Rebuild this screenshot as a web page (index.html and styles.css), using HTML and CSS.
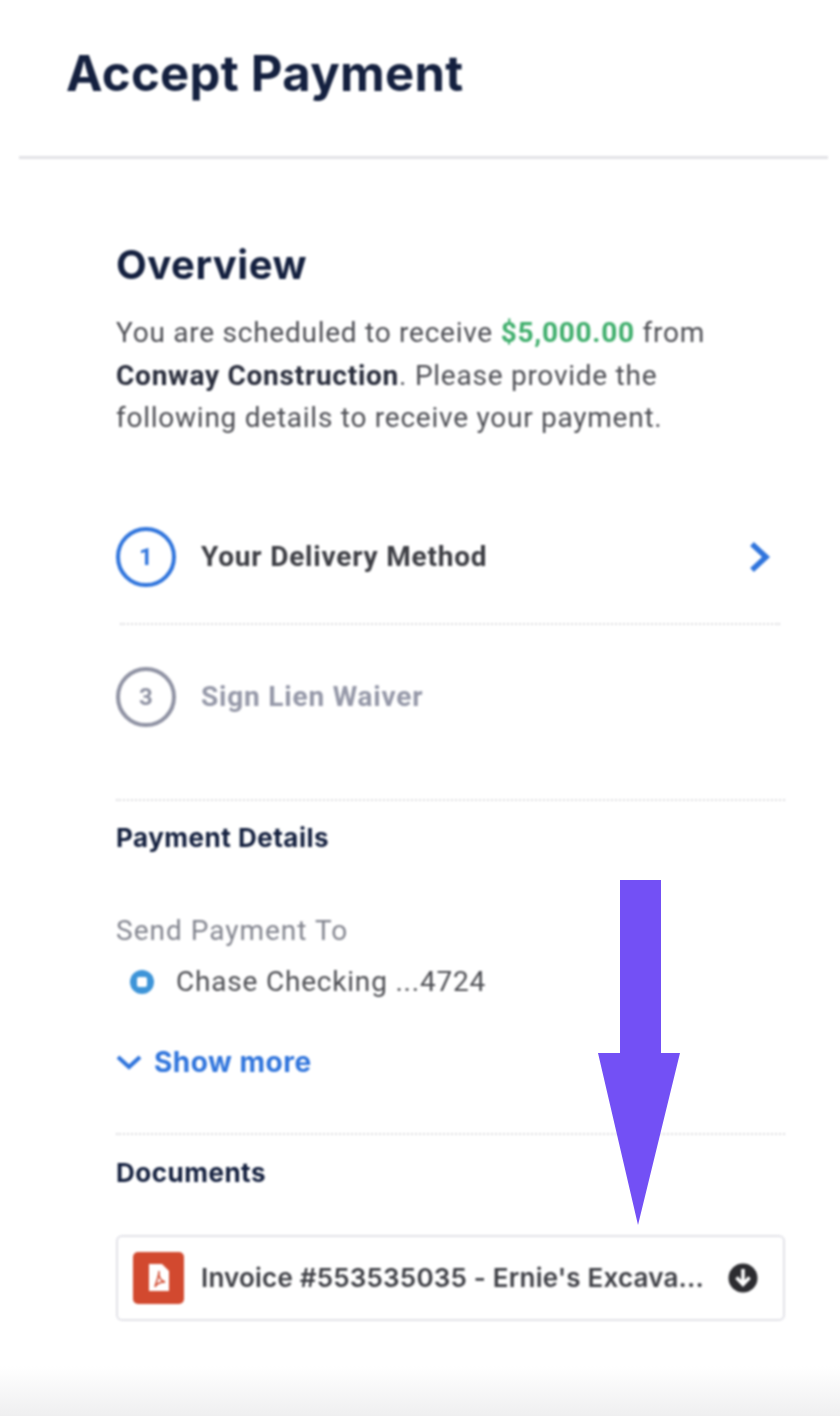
FILE: index.html
```html
<!DOCTYPE html>
<html lang="en">
<head>
    <meta charset="UTF-8">
    <meta name="viewport" content="width=device-width, initial-scale=1.0">
    <title>Accept Payment</title>
    <link rel="stylesheet" href="styles.css">
</head>
<body>

<div class="page">
    <header class="top">
        <h1>Accept Payment</h1>
    </header>

    <main class="content">
        <h2>Overview</h2>
        <p class="intro">You are scheduled to receive <b class="amount">$5,000.00</b> from <b>Conway Construction</b>. Please provide the following details to receive your payment.</p>

        <div class="steps">
            <div class="step active">
                <span class="num">1</span>
                <span class="step-name">Your Delivery Method</span>
                <svg class="chevron" width="24" height="32" viewBox="0 0 24 32" fill="none" stroke="#2f74dc" stroke-width="5.500"><path d="M4 3l14 13L4 29"/></svg>
            </div>
            <div class="step-rule"></div>
            <div class="step muted">
                <span class="num">3</span>
                <span class="step-name">Sign Lien Waiver</span>
            </div>
        </div>

        <section class="details">
            <h3>Payment Details</h3>
            <div class="label">Send Payment To</div>
            <div class="bank">
                <svg width="26" height="26" viewBox="0 0 26 26"><circle cx="13" cy="13" r="12" fill="#3d94d8"/><rect x="8" y="8" width="10" height="10" rx="2" fill="#fff"/></svg>
                <span>Chase Checking ...4724</span>
            </div>
            <a class="more" href="#">
                <svg width="26" height="16" viewBox="0 0 26 16" fill="none" stroke="#2f74dc" stroke-width="4"><path d="M2 3l11 10L24 3"/></svg>
                Show more
            </a>
        </section>

        <section class="docs">
            <h3>Documents</h3>
            <div class="file">
                <span class="pdf">
                    <svg width="20" height="27" viewBox="0 0 20 27"><path d="M0 0h13l7 7v20H0z" fill="#fff"/><path d="M10 7c-1 6 2 10 6 11-4 0-8 1-10 5 1-5 4-10 4-16z" fill="none" stroke="#d2492f" stroke-width="1.500"/></svg>
                </span>
                <span class="file-name">Invoice #553535035 - Ernie's Excava...</span>
                <svg width="30" height="30" viewBox="0 0 30 30"><circle cx="15" cy="15" r="14.500" fill="#2c2c30"/><path d="M15 6v15M8.500 14.500l6.500 7 6.500-7" fill="none" stroke="#fff" stroke-width="3.500"/></svg>
            </div>
        </section>
    </main>
</div>

<div class="fade"></div>

<svg class="arrow" width="82" height="345" viewBox="0 0 82 345"><path d="M22 0h41v173h19L40 345 0 173h22z" fill="#7350f5"/></svg>

</body>
</html>
```

FILE: styles.css
```css
html, body {
    margin: 0;
    padding: 0;
}
body {
    width: 840px;
    height: 1416px;
    position: relative;
    overflow: hidden;
    background: #fff;
    font-family: Roboto, Arial, sans-serif;
    color: #3f4045;
}
.page {
    filter: blur(0.9px);
}
.top {
    margin: 0 12px 0 19px;
    height: 156px;
    border-bottom: 3px solid #e2e2e6;
}
h1 {
    margin: 0;
    padding: 46px 0 0 47px;
    font-family: Inter, Arial, sans-serif;
    font-size: 49px;
    line-height: 56px;
    font-weight: 700;
    letter-spacing: 0.3px;
    color: #14203f;
}
.content {
    margin: 0 55px 0 116px;
}
h2 {
    margin: 0;
    padding-top: 82px;
    font-family: Inter, Arial, sans-serif;
    font-size: 40px;
    line-height: 48px;
    font-weight: 700;
    letter-spacing: 0.5px;
    color: #14203f;
}
.intro {
    margin: 23px 0 0;
    max-width: 620px;
    font-size: 28px;
    line-height: 42.500px;
    letter-spacing: 0.75px;
    color: #4d4e54;
}
.intro b {
    color: #2a2e3d;
}
.intro .amount {
    color: #3fae6c;
}
.steps {
    margin-top: 87px;
}
.step {
    display: flex;
    align-items: center;
    gap: 25px;
    height: 60px;
    font-size: 28px;
    letter-spacing: 0.8px;
    font-weight: 700;
}
.step.active {
    color: #3d3e44;
}
.step.muted {
    color: #9598a8;
}
.step-rule {
    margin: 36px 5px 42px 4px;
    border-top: 2px dotted #dcdce0;
}
.num {
    box-sizing: border-box;
    width: 60px;
    height: 60px;
    border: 4px solid #2f74dc;
    border-radius: 50%;
    display: flex;
    align-items: center;
    justify-content: center;
    font-size: 24px;
    letter-spacing: 0;
    color: #2f74dc;
}
.muted .num {
    border-color: #8f92a3;
    color: #8f92a3;
}
.step-name {
    flex: 1;
}
.chevron {
    margin-right: 13px;
}
.details {
    margin-top: 72px;
    border-top: 2px dotted #dcdce0;
    height: 332px;
}
h3 {
    margin: 0;
    padding-top: 22px;
    font-family: Inter, Arial, sans-serif;
    font-size: 26px;
    line-height: 30px;
    font-weight: 700;
    letter-spacing: 0.5px;
    color: #14203f;
}
.label {
    margin-top: 60px;
    font-size: 28px;
    line-height: 36px;
    letter-spacing: 1px;
    color: #83858f;
}
.bank {
    display: flex;
    align-items: center;
    gap: 21px;
    margin: 15px 0 0 13px;
    font-size: 28px;
    line-height: 36px;
    letter-spacing: 0.8px;
    color: #4d4e53;
}
.more {
    display: flex;
    align-items: center;
    gap: 12px;
    margin-top: 44px;
    font-family: Inter, Arial, sans-serif;
    font-size: 28px;
    line-height: 36px;
    font-weight: 700;
    letter-spacing: 0.5px;
    color: #2f74dc;
    text-decoration: none;
}
.docs {
    border-top: 2px dotted #dcdce0;
}
.docs h3 {
    padding-top: 23px;
}
.file {
    box-sizing: border-box;
    height: 86px;
    margin-top: 47px;
    display: flex;
    align-items: center;
    gap: 17px;
    padding: 0 25px 0 15px;
    border: 2px solid #e2e2e8;
    border-radius: 6px;
}
.pdf {
    flex: none;
    width: 51px;
    height: 52px;
    border-radius: 5px;
    background: #d2492f;
    display: flex;
    align-items: center;
    justify-content: center;
}
.file-name {
    flex: 1;
    font-family: Inter, Arial, sans-serif;
    font-size: 26px;
    font-weight: 600;
    letter-spacing: 0.2px;
    white-space: nowrap;
    color: #3d3e44;
}
.fade {
    position: absolute;
    left: 0;
    right: 0;
    bottom: 0;
    height: 50px;
    background: linear-gradient(#fff, #efeff0);
}
.arrow {
    position: absolute;
    left: 598px;
    top: 880px;
    filter: blur(0.5px);
}
```
